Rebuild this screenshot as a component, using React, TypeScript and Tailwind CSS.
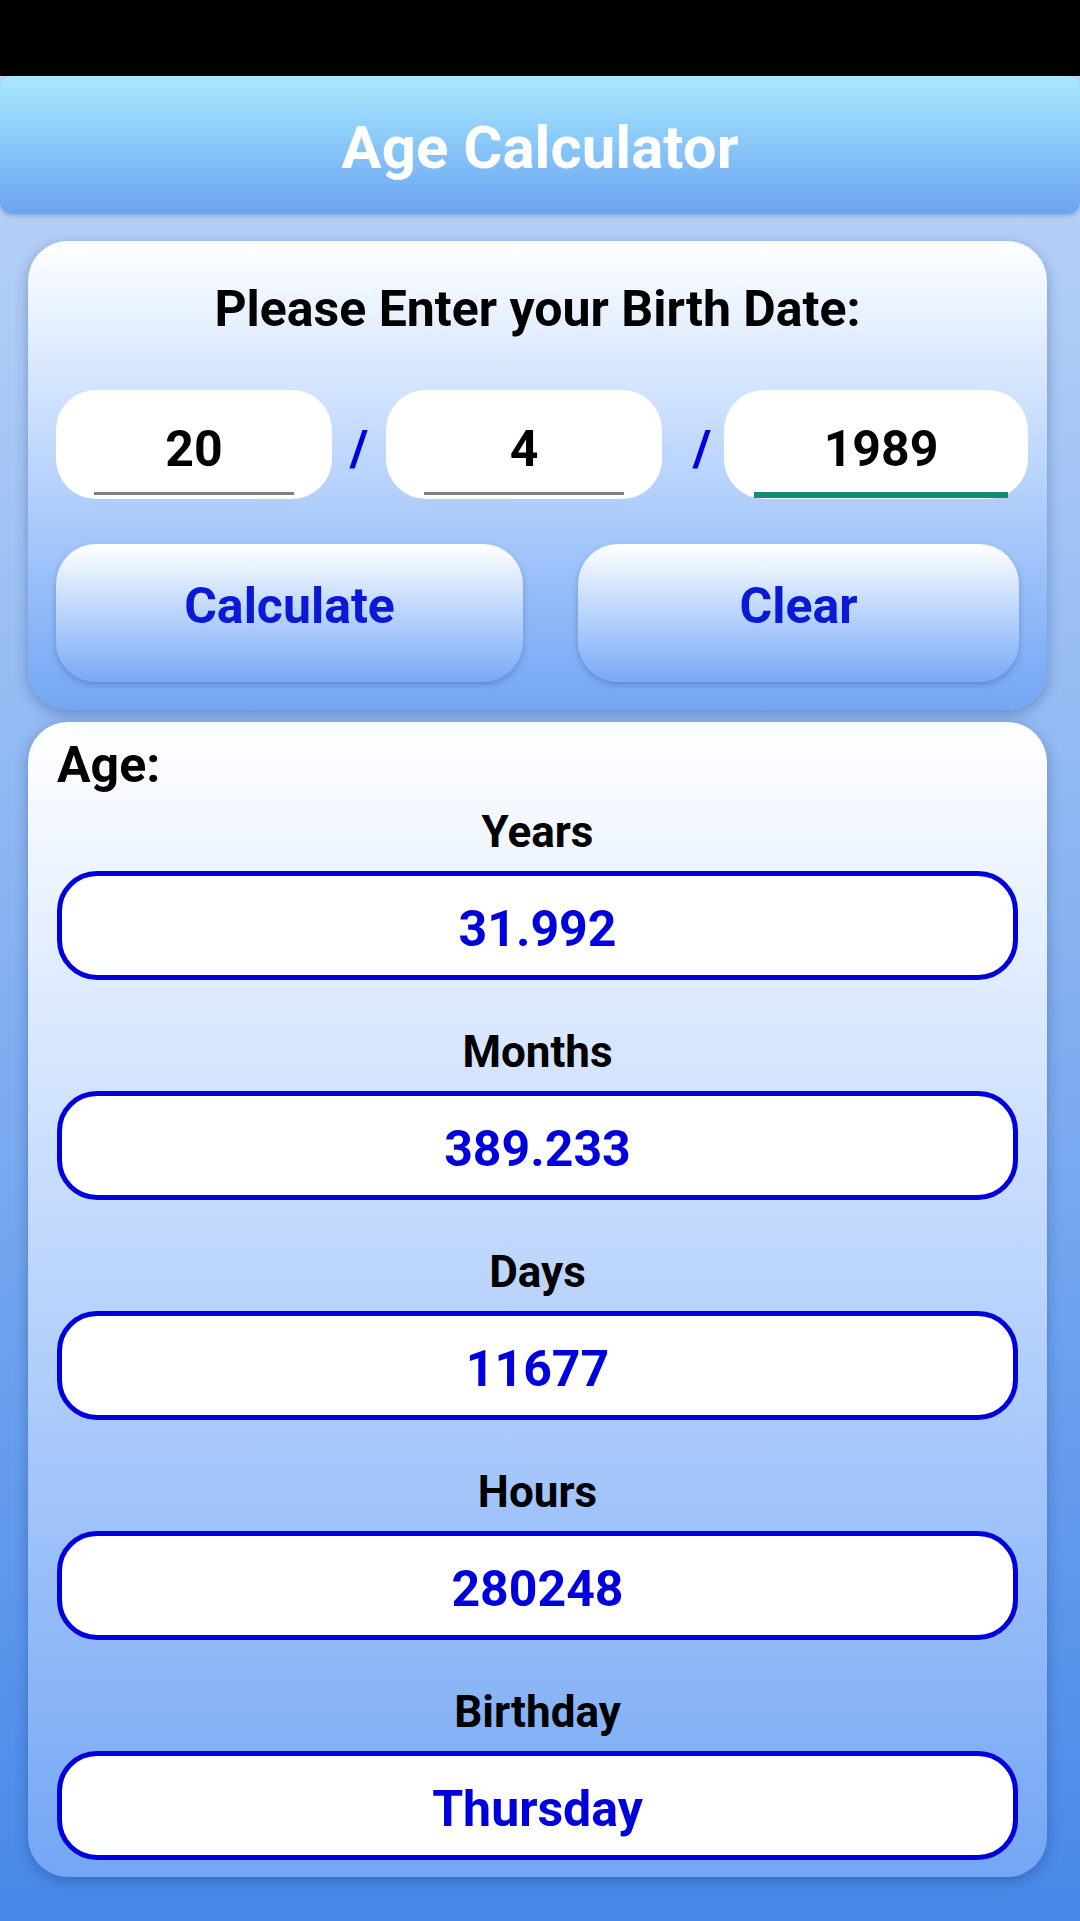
import React from "react";

const items = [
  { label: "Years", value: "31.992" },
  { label: "Months", value: "389.233" },
  { label: "Days", value: "11677" },
  { label: "Hours", value: "280248" },
  { label: "Birthday", value: "Thursday" },
];

export default function App() {
  return (
    <div className="w-[1080px] h-[1921px] overflow-hidden font-['Roboto',sans-serif]">
      <div className="h-[76px] bg-black" />
      <div className="h-[1845px] bg-gradient-to-b from-[#bdd5f7] to-[#4788e8] flex flex-col">
        <div className="h-[138px] rounded-[12px] bg-gradient-to-b from-[#a8e9fe] to-[#6ca4f1] shadow-[0_2px_4px_rgba(30,60,120,0.25)] pt-[37px] text-center">
          <div className="text-[60px] leading-[70px] font-bold text-white">Age Calculator</div>
        </div>

        <div className="ml-[28px] w-[1019px] mt-[27px] h-[469px] rounded-[40px] bg-gradient-to-b from-white to-[#73a6f4] shadow-[0_4px_14px_rgba(20,50,110,0.35)] pt-[39px]">
          <div className="text-center text-[50px] leading-[59px] font-bold text-black">Please Enter your Birth Date:</div>
          <div className="mt-[51px] flex items-start pl-[28px] h-[109px]">
            <div className="w-[276px] h-[109px] rounded-[40px] bg-white flex flex-col pt-[30px]">
              <div className="text-center text-[50px] leading-[59px] font-bold text-black">20</div>
              <div className="mt-[13px] mx-[38px] h-[3px] bg-[#808080]" />
            </div>
            <div className="w-[54px] text-center text-[50px] leading-[59px] font-bold text-[#0000dd] pt-[30px]">/</div>
            <div className="w-[276px] h-[109px] rounded-[40px] bg-white flex flex-col pt-[30px]">
              <div className="text-center text-[50px] leading-[59px] font-bold text-black">4</div>
              <div className="mt-[13px] mx-[38px] h-[3px] bg-[#808080]" />
            </div>
            <div className="w-[62px] pl-[18px] text-center text-[50px] leading-[59px] font-bold text-[#0000dd] pt-[30px]">/</div>
            <div className="w-[304px] h-[109px] rounded-[40px] bg-white flex flex-col pt-[30px]">
              <div className="pl-[10px] text-center text-[50px] leading-[59px] font-bold text-black">1989</div>
              <div className="mt-[13px] ml-[30px] mr-[20px] h-[6px] bg-[#168a74]" />
            </div>
          </div>
          <div className="mt-[45px] flex pl-[28px] gap-[55px]">
            <div className="w-[467px] h-[138px] rounded-[40px] bg-gradient-to-b from-white to-[#78a9f5] shadow-[0_3px_6px_rgba(30,60,130,0.3)] flex items-center justify-center pb-[13px]">
              <span className="text-[50px] leading-[59px] font-bold text-[#0a1ad4]">Calculate</span>
            </div>
            <div className="w-[441px] h-[138px] rounded-[40px] bg-gradient-to-b from-white to-[#78a9f5] shadow-[0_3px_6px_rgba(30,60,130,0.3)] flex items-center justify-center pb-[13px]">
              <span className="text-[50px] leading-[59px] font-bold text-[#0a1ad4]">Clear</span>
            </div>
          </div>
        </div>

        <div className="ml-[28px] w-[1019px] mt-[12px] rounded-[40px] bg-gradient-to-b from-white to-[#74a6f4] shadow-[0_4px_14px_rgba(20,50,110,0.35)] pt-[14px] pb-[17px]">
          <div className="pl-[29px] text-[50px] leading-[59px] font-bold text-black">Age:</div>
          <div className="mt-[11px] flex flex-col">
            {items.map((it, i) => (
              <div key={it.label} className={i === 0 ? "" : "mt-[46px]"}>
                <div className="text-center text-[44px] leading-[52px] font-bold text-black">{it.label}</div>
                <div className="mt-[13px] ml-[29px] w-[961px] h-[109px] rounded-[40px] border-[5px] border-[#0000dc] bg-white flex items-center justify-center pt-[8px]">
                  <span className="text-[50px] leading-[59px] font-bold text-[#0000dd]">{it.value}</span>
                </div>
              </div>
            ))}
          </div>
        </div>
      </div>
    </div>
  );
}
